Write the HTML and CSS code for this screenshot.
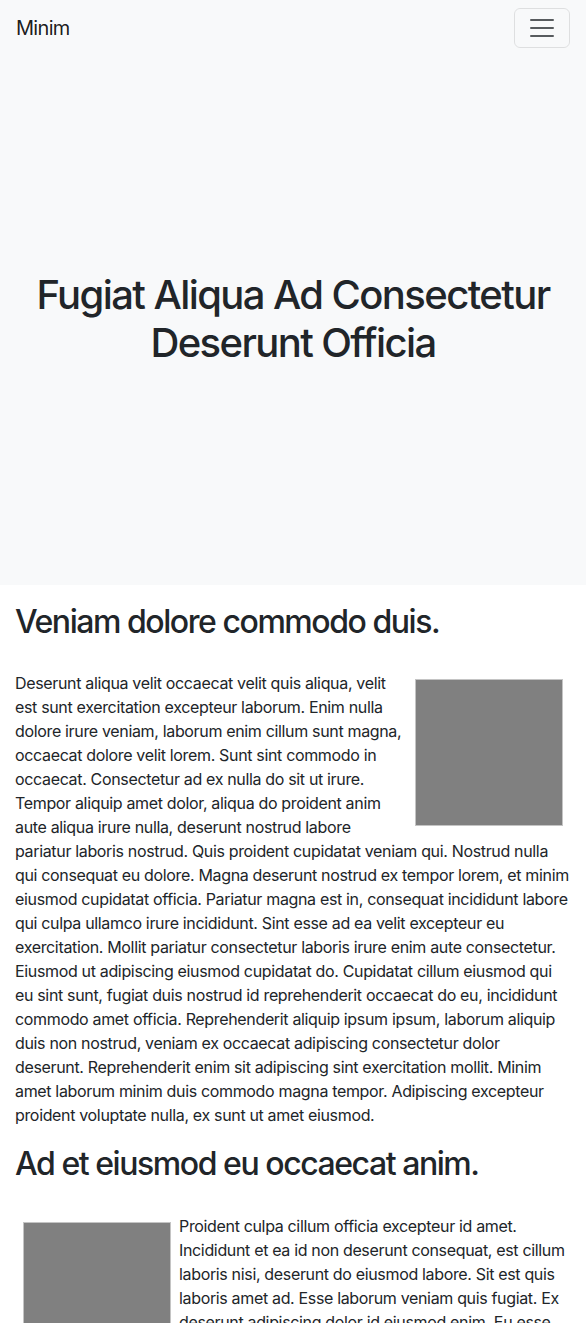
FILE: index.html
```html
<!DOCTYPE html>
<html lang="en">
<head>
<meta charset="utf-8">
<title>Minim</title>
<link rel="stylesheet" href="styles.css">
</head>
<body>
<nav class="navbar">
  <a class="brand" href="#">Minim</a>
  <button class="toggler" type="button" aria-label="Toggle navigation">
    <svg class="toggler-icon" viewBox="0 0 30 30" width="30" height="30"><path stroke="rgba(33,37,41,0.75)" stroke-linecap="round" stroke-miterlimit="10" stroke-width="2" d="M4 7h22M4 15h22M4 23h22"/></svg>
  </button>
</nav>
<header class="hero">
  <h1>Fugiat Aliqua Ad Consectetur Deserunt Officia</h1>
</header>
<main class="container">
  <section class="section">
    <h2>Veniam dolore commodo duis.</h2>
    <p><span class="thumb thumb-right"></span>Deserunt aliqua velit occaecat velit quis aliqua, velit est sunt exercitation excepteur laborum. Enim nulla dolore irure veniam, laborum enim cillum sunt magna, occaecat dolore velit lorem. Sunt sint commodo in occaecat. Consectetur ad ex nulla do sit ut irure. Tempor aliquip amet dolor, aliqua do proident anim aute aliqua irure nulla, deserunt nostrud labore pariatur laboris nostrud. Quis proident cupidatat veniam qui. Nostrud nulla qui consequat eu dolore. Magna deserunt nostrud ex tempor lorem, et minim eiusmod cupidatat officia. Pariatur magna est in, consequat incididunt labore qui culpa ullamco irure incididunt. Sint esse ad ea velit excepteur eu exercitation. Mollit pariatur consectetur laboris irure enim aute consectetur. Eiusmod ut adipiscing eiusmod cupidatat do. Cupidatat cillum eiusmod qui eu sint sunt, fugiat duis nostrud id reprehenderit occaecat do eu, incididunt commodo amet officia. Reprehenderit aliquip ipsum ipsum, laborum aliquip duis non nostrud, veniam ex occaecat adipiscing consectetur dolor deserunt. Reprehenderit enim sit adipiscing sint exercitation mollit. Minim amet laborum minim duis commodo magna tempor. Adipiscing excepteur proident voluptate nulla, ex sunt ut amet eiusmod.</p>
  </section>
  <section class="section">
    <h2>Ad et eiusmod eu occaecat anim.</h2>
    <p><span class="thumb thumb-left"></span>Proident culpa cillum officia excepteur id amet. Incididunt et ea id non deserunt consequat, est cillum laboris nisi, deserunt do eiusmod labore. Sit est quis laboris amet ad. Esse laborum veniam quis fugiat. Ex deserunt adipiscing dolor id eiusmod enim. Eu esse cillum nulla, ut magna aliqua sint officia. Lorem dolore commodo ut, minim irure duis consequat aute labore. Velit sunt dolor enim nostrud ad ipsum.</p>
  </section>
</main>
</body>
</html>
```
FILE: styles.css
```css
* { box-sizing: border-box; }
html, body { margin: 0; padding: 0; }
body {
  font-family: Inter, "Liberation Sans", Arial, sans-serif;
  font-size: 16px;
  line-height: 1.5;
  letter-spacing: -0.34px;
  color: #212529;
  background: #fff;
}
.navbar {
  display: flex;
  align-items: center;
  justify-content: space-between;
  padding: 8px 16px;
  background: #f8f9fa;
}
.brand {
  font-size: 20px;
  line-height: 30px;
  letter-spacing: -0.7px;
  color: rgba(0, 0, 0, 0.9);
  text-decoration: none;
  padding: 5px 0;
}
.toggler {
  display: flex;
  align-items: center;
  justify-content: center;
  width: 56px;
  height: 40px;
  padding: 4px 12px;
  background: transparent;
  border: 1px solid rgba(0, 0, 0, 0.1);
  border-radius: 6px;
}
.toggler-icon { display: block; width: 30px; height: 30px; }
.hero {
  height: 529px;
  display: flex;
  align-items: center;
  justify-content: center;
  background: #f8f9fa;
  text-align: center;
  padding: 0 15px 4px;
}
.hero h1 {
  margin: 0;
  font-size: 40px;
  line-height: 1.2;
  font-weight: 500;
  letter-spacing: -1.6px;
}
.container {
  padding: 18px 15px 0;
}
.section h2 {
  margin: 0 0 30px;
  font-size: 32px;
  line-height: 1.2;
  font-weight: 500;
  letter-spacing: -1.45px;
}
.section p {
  margin: 0 0 18px;
}
.thumb {
  display: block;
  width: 148px;
  height: 147px;
  margin: 8px;
  background: #808080;
  border: 1px solid #c4c4c4;
}
.thumb-right { float: right; }
.thumb-left { float: left; }
```
